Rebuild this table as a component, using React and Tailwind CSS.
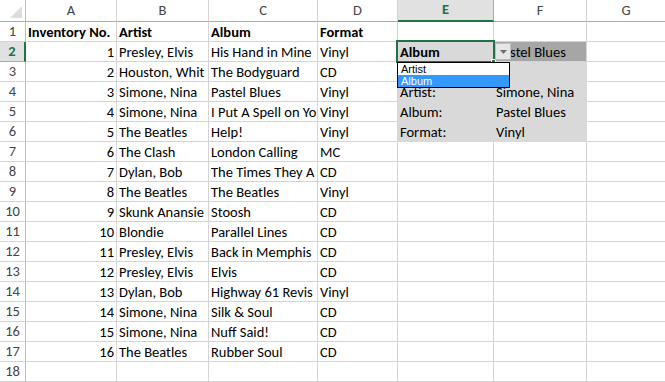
import React from 'react';

// cell texts as they show in the sheet (long ones are cut by the next column)
const records = [
  ['Presley, Elvis', 'His Hand in Mine', 'Vinyl'],
  ['Houston, Whit', 'The Bodyguard', 'CD'],
  ['Simone, Nina', 'Pastel Blues', 'Vinyl'],
  ['Simone, Nina', 'I Put A Spell on Yo', 'Vinyl'],
  ['The Beatles', 'Help!', 'Vinyl'],
  ['The Clash', 'London Calling', 'MC'],
  ['Dylan, Bob', 'The Times They A', 'CD'],
  ['The Beatles', 'The Beatles', 'Vinyl'],
  ['Skunk Anansie', 'Stoosh', 'CD'],
  ['Blondie', 'Parallel Lines', 'CD'],
  ['Presley, Elvis', 'Back in Memphis', 'CD'],
  ['Presley, Elvis', 'Elvis', 'CD'],
  ['Dylan, Bob', 'Highway 61 Revis', 'Vinyl'],
  ['Simone, Nina', 'Silk & Soul', 'CD'],
  ['Simone, Nina', 'Nuff Said!', 'CD'],
  ['The Beatles', 'Rubber Soul', 'CD'],
];

// lookup block in E/F, rows 2-6
const lookup = {
  2: ['Album', 'Pastel Blues'],
  3: ['', ''],
  4: ['Artist:', 'Simone, Nina'],
  5: ['Album:', 'Pastel Blues'],
  6: ['Format:', 'Vinyl'],
};

const cell = 'h-5 border-r border-b border-[#d4d4d4] overflow-hidden whitespace-nowrap px-[2px] flex items-center text-[14.5px] leading-5 text-black';

const Cell = ({ children, className = '' }) => (
  <div className={`${cell} ${className}`}>{children}</div>
);

const RowHead = ({ n }) => {
  const active = n === 2;
  return (
    <div
      className={`h-5 border-b flex items-center justify-center text-[14.5px] ${
        active
          ? 'bg-[#e1e1e1] border-[#ababab] border-r-2 border-r-[#217346] text-[#217346] font-bold'
          : 'bg-white border-[#d4d4d4] border-r border-r-[#bdbdbd] text-[#444]'
      }`}
    >
      {n}
    </div>
  );
};

export default function App() {
  const letters = ['A', 'B', 'C', 'D', 'E', 'F', 'G'];
  const rows = [];

  for (let n = 1; n <= 18; n++) {
    const cells = [<RowHead key="h" n={n} />];
    if (n === 1) {
      cells.push(<Cell key="a" className="font-bold">Inventory No.</Cell>);
      cells.push(<Cell key="b" className="font-bold">Artist</Cell>);
      cells.push(<Cell key="c" className="font-bold">Album</Cell>);
      cells.push(<Cell key="d" className="font-bold">Format</Cell>);
    } else if (n <= 17) {
      const r = records[n - 2];
      cells.push(<Cell key="a" className="justify-end">{n - 1}</Cell>);
      cells.push(<Cell key="b">{r[0]}</Cell>);
      cells.push(<Cell key="c">{r[1]}</Cell>);
      cells.push(<Cell key="d">{r[2]}</Cell>);
    } else {
      cells.push(<Cell key="a" />, <Cell key="b" />, <Cell key="c" />, <Cell key="d" />);
    }

    if (lookup[n]) {
      const [e, f] = lookup[n];
      cells.push(
        <Cell key="e" className={`bg-[#d9d9d9] border-[#d9d9d9] ${n === 2 ? 'font-bold' : ''}`}>{e}</Cell>
      );
      cells.push(
        <Cell key="f" className={n === 2 ? 'bg-[#a6a6a6] border-[#a6a6a6]' : 'bg-[#d9d9d9] border-[#d9d9d9]'}>{f}</Cell>
      );
    } else {
      cells.push(<Cell key="e" />, <Cell key="f" />);
    }
    cells.push(<Cell key="g" className="border-r-0" />);
    rows.push(cells);
  }

  return (
    <div className="relative w-[665px] h-[382px] overflow-hidden bg-white font-['Carlito','Lato',sans-serif]">
      <div className="grid grid-cols-[26px_91px_92px_109px_80px_96px_93px_1fr]">
        {/* header */}
        <div className="h-[22px] border-r border-b border-r-[#bdbdbd] border-b-[#ababab] bg-white flex items-end justify-end p-[3px]">
          <svg width="12" height="12" viewBox="0 0 12 12">
            <path d="M12 0 L12 12 L0 12 Z" fill="#dcdcdc" />
          </svg>
        </div>
        {letters.map((l) => (
          <div
            key={l}
            className={`h-[22px] flex items-center justify-center text-[14.5px] ${
              l === 'E'
                ? 'bg-[#e1e1e1] border-r border-r-[#ababab] border-b-2 border-b-[#217346] text-[#217346] font-bold'
                : `bg-white border-b border-b-[#ababab] text-[#444] ${l === 'G' ? '' : 'border-r border-r-[#d4d4d4]'}`
            }`}
          >
            {l}
          </div>
        ))}
        {rows.map((cells, i) => (
          <React.Fragment key={i}>{cells}</React.Fragment>
        ))}
      </div>

      {/* active cell E2 */}
      <div className="absolute left-[396px] top-[40px] w-[99px] h-[23px] border-2 border-[#217346]" />
      <div className="absolute left-[491px] top-[59px] w-[5px] h-[5px] bg-[#217346] border border-white" />

      {/* data validation dropdown button */}
      <div className="absolute left-[495px] top-[43px] w-[16px] h-[17px] bg-[#e6e6e6] border border-[#bdbdbd] flex items-center justify-center">
        <svg width="7" height="4" viewBox="0 0 7 4">
          <path d="M0 0 L7 0 L3.5 4 Z" fill="#6d6d6d" />
        </svg>
      </div>

      {/* dropdown list */}
      <div className="absolute left-[397px] top-[62px] w-[113px] border border-black bg-white font-['Liberation_Sans',sans-serif] text-[11px] leading-[12px]">
        <div className="px-[3px] text-black">Artist</div>
        <div className="px-[3px] bg-[#3399ff] text-white">Album</div>
      </div>
    </div>
  );
}
